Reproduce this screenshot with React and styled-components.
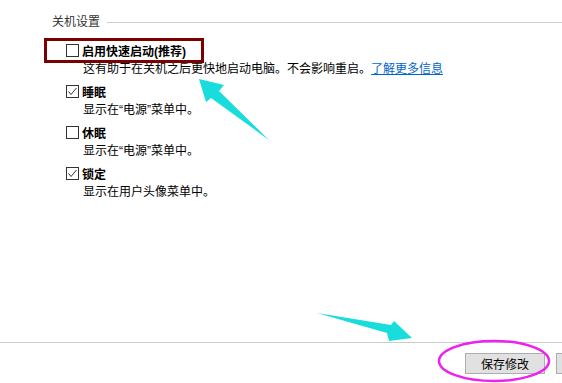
import React from "react";
import styled, { createGlobalStyle } from "styled-components";

const GlobalStyle = createGlobalStyle`
  html, body {
    margin: 0;
    padding: 0;
    background: #ffffff;
    overflow: hidden;
  }
  body {
    font-family: "Liberation Sans", "Noto Sans CJK SC", sans-serif;
    font-size: 12px;
    color: #000;
  }
`;

const Page = styled.div`
  position: relative;
  width: 562px;
  height: 383px;
  display: flex;
  flex-direction: column;
  overflow: hidden;
`;

const Content = styled.div`
  flex: 1;
  padding: 14px 0 0 52px;
`;

const GroupHeader = styled.div`
  display: flex;
  align-items: center;
  gap: 7px;
  height: 16px;
  line-height: 16px;
  color: #333;
`;

const HeaderLine = styled.div`
  flex: 1;
  height: 1px;
  background: #cfcfcf;
`;

const Options = styled.div`
  margin-top: 11px;
  padding-left: 14px;
`;

const Option = styled.div`
  margin-bottom: 4px;
`;

const LabelRow = styled.label`
  display: flex;
  align-items: center;
  gap: 3px;
  height: 19px;
  font-weight: bold;
`;

const Box = styled.span`
  box-sizing: border-box;
  width: 13px;
  height: 13px;
  border: 1px solid #333;
  background: #fff;
  display: flex;
  align-items: center;
  justify-content: center;
`;

const Desc = styled.div`
  padding-left: 17px;
  height: 18px;
  line-height: 18px;
  white-space: nowrap;
`;

const Link = styled.a`
  color: #0066cc;
  text-decoration: underline;
`;

const Footer = styled.div`
  border-top: 1px solid #cccccc;
  height: 41px;
  box-sizing: border-box;
  display: flex;
  align-items: flex-start;
  gap: 11px;
  padding: 10px 0 0 465px;
`;

const Button = styled.button`
  flex: none;
  width: 80px;
  height: 21px;
  box-sizing: border-box;
  border: 1px solid #adadad;
  background: #e1e1e1;
  font-family: inherit;
  font-size: 12px;
  color: #000;
  padding: 0;
`;

const Overlay = styled.svg`
  position: absolute;
  left: 0;
  top: 0;
  pointer-events: none;
`;

function Checkbox({ checked }) {
  return (
    <Box>
      {checked && (
        <svg width="11" height="11" viewBox="0 0 11 11">
          <polyline points="1.5,5.5 4,8.5 9.5,2" fill="none" stroke="#333" strokeWidth="1" />
        </svg>
      )}
    </Box>
  );
}

const options = [
  { label: "启用快速启动(推荐)", checked: false, link: true, desc: "这有助于在关机之后更快地启动电脑。不会影响重启。" },
  { label: "睡眠", checked: true, desc: "显示在“电源”菜单中。" },
  { label: "休眠", checked: false, desc: "显示在“电源”菜单中。" },
  { label: "锁定", checked: true, desc: "显示在用户头像菜单中。" },
];

export default function App() {
  return (
    <>
      <GlobalStyle />
      <Page>
        <Content>
          <GroupHeader>
            关机设置
            <HeaderLine />
          </GroupHeader>
          <Options>
            {options.map((o) => (
              <Option key={o.label}>
                <LabelRow>
                  <Checkbox checked={o.checked} />
                  {o.label}
                </LabelRow>
                <Desc>
                  {o.desc}
                  {o.link && <Link href="#">了解更多信息</Link>}
                </Desc>
              </Option>
            ))}
          </Options>
        </Content>
        <Footer>
          <Button>保存修改</Button>
          <Button aria-label="取消" />
        </Footer>
        <Overlay width="562" height="383" viewBox="0 0 562 383">
          <rect x="45.5" y="39.5" width="157" height="22" fill="none" stroke="#7b0000" strokeWidth="3" />
          <polygon
            points="199,79 224,85 219,91 269,140 211,98 206,102"
            fill="#19dcdc"
          />
          <polygon
            points="317,313 391,325 394,321 412,338 389,341 387,333"
            fill="#19dcdc"
          />
          <ellipse cx="494" cy="361" rx="55" ry="20" fill="none" stroke="#ee22ee" strokeWidth="2.5" />
        </Overlay>
      </Page>
    </>
  );
}
